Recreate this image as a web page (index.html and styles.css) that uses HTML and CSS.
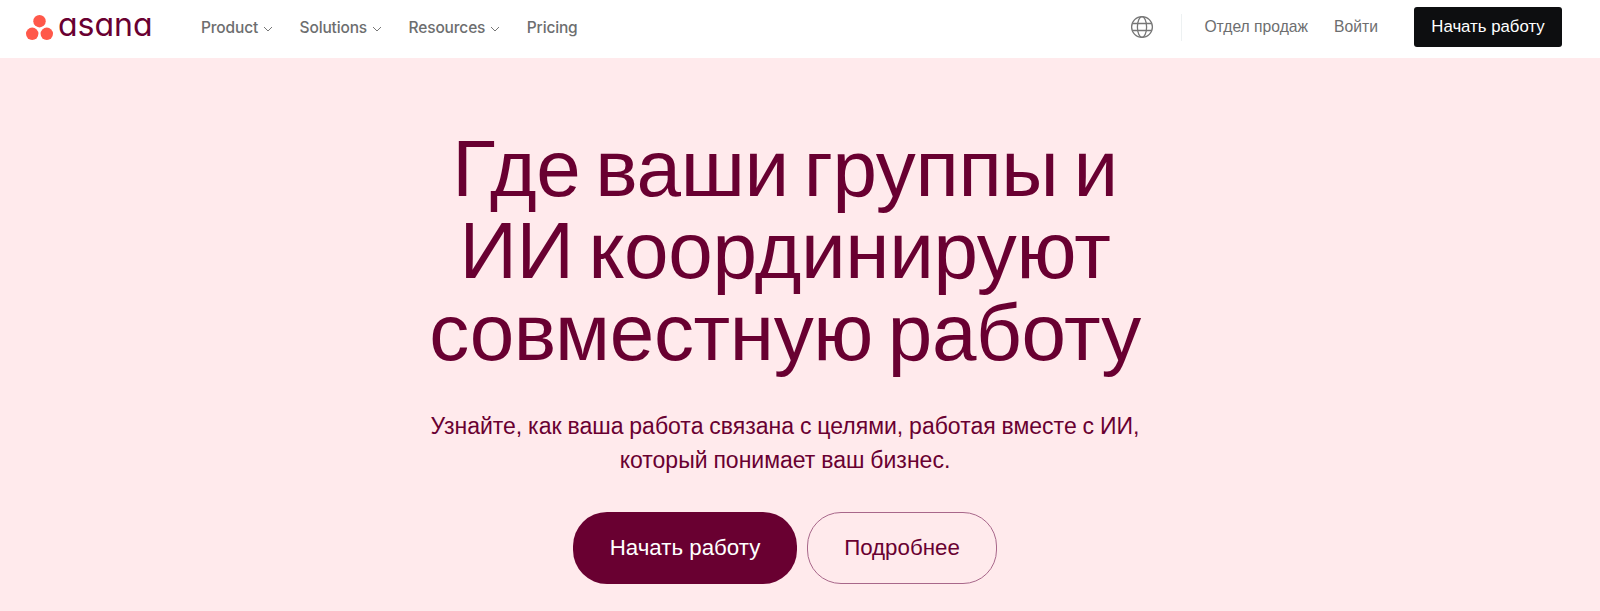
FILE: index.html
```html
<!DOCTYPE html>
<html lang="ru">
<head>
    <meta charset="UTF-8">
    <meta name="viewport" content="width=device-width, initial-scale=1.0">
    <title>Asana</title>
    <link rel="stylesheet" href="styles.css">
</head>
<body>
    <header class="topbar">
        <a class="logo" href="#">
            <svg class="logo-mark" width="27" height="25" viewBox="0 0 27 25">
                <circle cx="13.5" cy="6.2" r="6.2" fill="#ff584a"/>
                <circle cx="6.2" cy="18.8" r="6.2" fill="#ff584a"/>
                <circle cx="20.8" cy="18.8" r="6.2" fill="#ff584a"/>
            </svg>
            <span class="logo-text">asana</span>
        </a>
        <nav class="nav-main">
            <a href="#">Product<svg class="chev" width="10" height="6" viewBox="0 0 10 6"><path d="M1 1l4 4 4-4" fill="none" stroke="#777" stroke-width="1"/></svg></a>
            <a href="#">Solutions<svg class="chev" width="10" height="6" viewBox="0 0 10 6"><path d="M1 1l4 4 4-4" fill="none" stroke="#777" stroke-width="1"/></svg></a>
            <a href="#">Resources<svg class="chev" width="10" height="6" viewBox="0 0 10 6"><path d="M1 1l4 4 4-4" fill="none" stroke="#777" stroke-width="1"/></svg></a>
            <a href="#">Pricing</a>
        </nav>
        <div class="nav-right">
            <svg class="globe" width="24" height="24" viewBox="0 0 24 24" fill="none" stroke="#777" stroke-width="1.3">
                <circle cx="12" cy="12" r="10.4"/>
                <ellipse cx="12" cy="12" rx="4.6" ry="10.4"/>
                <path d="M2.4 8.5h19.2M2.4 15.5h19.2"/>
            </svg>
            <span class="divider"></span>
            <a class="link-sales" href="#">Отдел продаж</a>
            <a class="link-login" href="#">Войти</a>
            <a class="btn-top" href="#">Начать работу</a>
        </div>
    </header>

    <main class="hero">
        <h1>Где ваши группы и<br>ИИ координируют<br>совместную работу</h1>
        <p>Узнайте, как ваша работа связана с целями, работая вместе с ИИ,<br>который понимает ваш бизнес.</p>
        <div class="hero-buttons">
            <a class="btn btn-primary" href="#">Начать работу</a>
            <a class="btn btn-outline" href="#">Подробнее</a>
        </div>
    </main>
</body>
</html>
```

FILE: styles.css
```css
html, body {
    height: 100%;
}

body {
    margin: 0;
    font-family: "Liberation Sans", Arial, sans-serif;
    background-color: #ffeaec;
    color: #690031;
    overflow: hidden;
}

a {
    text-decoration: none;
    color: inherit;
}

.topbar {
    box-sizing: border-box;
    height: 58px;
    background-color: #fff;
    display: flex;
    align-items: center;
    padding: 0 38px 4px 26px;
}

.logo {
    display: flex;
    align-items: center;
    gap: 5px;
    width: 175px;
}

.logo-text {
    font-family: Inter, sans-serif;
    font-feature-settings: "cv11";
    font-size: 32px;
    font-weight: 400;
    line-height: 1;
    color: #690031;
    margin-top: -4px;
}

.nav-main {
    display: flex;
    gap: 26.5px;
    font-family: Inter, sans-serif;
    font-size: 15.5px;
    font-weight: 500;
    letter-spacing: -0.15px;
    color: #6d6e6f;
}

.chev {
    margin-left: 5px;
    vertical-align: 1px;
}

.nav-right {
    margin-left: auto;
    display: flex;
    align-items: center;
    font-size: 15.7px;
    color: #6d6e6f;
}

.divider {
    width: 1px;
    height: 27px;
    background-color: #edf1f2;
    margin: 0 22px 0 27px;
}

.link-login {
    margin-left: 26px;
}

.btn-top {
    margin-left: 36px;
    background-color: #0d0e10;
    color: #fff;
    font-size: 16.8px;
    height: 40px;
    width: 148px;
    display: flex;
    align-items: center;
    justify-content: center;
    border-radius: 3px;
}

.hero {
    text-align: center;
    padding: 70px 30px 0 0;
}

.hero h1 {
    margin: 0;
    font-size: 80px;
    line-height: 82px;
    font-weight: 400;
    letter-spacing: -0.35px;
    word-spacing: -7px;
}

.hero p {
    margin: 35px 0 0;
    font-size: 23px;
    line-height: 34px;
    word-spacing: -0.5px;
}

.hero-buttons {
    display: flex;
    justify-content: center;
    gap: 10px;
    margin-top: 35px;
}

.btn {
    box-sizing: border-box;
    height: 72px;
    display: flex;
    align-items: center;
    justify-content: center;
    border-radius: 34px;
    font-size: 22.3px;
}

.btn-primary {
    width: 224px;
    background-color: #690031;
    color: #fff;
}

.btn-outline {
    width: 190px;
    border: 1px solid #a8678a;
    color: #690031;
}
```
